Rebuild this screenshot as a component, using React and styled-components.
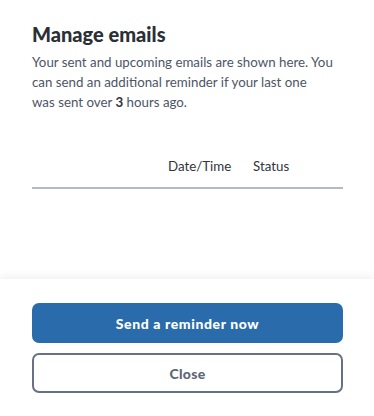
import React from 'react';
import styled, { createGlobalStyle } from 'styled-components';

const GlobalStyle = createGlobalStyle`
  html, body {
    margin: 0;
    padding: 0;
    background: #ffffff;
  }
  body {
    font-family: Lato, 'Open Sans', sans-serif;
    -webkit-font-smoothing: antialiased;
  }
`;

const Modal = styled.div`
  width: 374px;
  height: 416px;
  display: flex;
  flex-direction: column;
  background: #ffffff;
  overflow: hidden;
`;

const Body = styled.div`
  flex: 1;
  padding: 22px 31px 0 32px;
`;

const Title = styled.h2`
  margin: 0;
  font-size: 20px;
  line-height: 24px;
  font-weight: 900;
  color: #2b2f36;
`;

const Intro = styled.p`
  margin: 6px 0 0;
  font-size: 13.3px;
  line-height: 20px;
  color: #4d5566;

  strong {
    font-weight: 700;
    color: #2f343d;
  }
`;

const Table = styled.div`
  margin-top: 44px;
`;

const HeadRow = styled.div`
  display: grid;
  grid-template-columns: 136px 85px 1fr;
  padding-bottom: 11px;
  border-bottom: 2px solid #b4b9c5;
`;

const HeadCell = styled.div`
  font-size: 13.3px;
  line-height: 20px;
  color: #30343b;
`;

const Footer = styled.div`
  display: flex;
  flex-direction: column;
  gap: 10px;
  padding: 24px 31px 23px 32px;
  box-shadow: 0 -3px 8px rgba(0, 0, 0, 0.06);
`;

const Button = styled.button`
  height: 40px;
  width: 100%;
  border-radius: 7px;
  font-family: Lato, 'Open Sans', sans-serif;
  font-size: 14px;
  font-weight: 900;
  letter-spacing: ${(p) => (p.$primary ? '0.6px' : '0.3px')};
  cursor: pointer;
  border: 2px solid ${(p) => (p.$primary ? '#2a6cab' : '#687184')};
  background: ${(p) => (p.$primary ? '#2a6cab' : '#ffffff')};
  color: ${(p) => (p.$primary ? '#ffffff' : '#5f6778')};
`;

export default function App() {
  return (
    <>
      <GlobalStyle />
      <Modal>
        <Body>
          <Title>Manage emails</Title>
          <Intro>
            Your sent and upcoming emails are shown here. You can send an additional reminder if
            your last one
            <br />
            was sent over <strong>3</strong> hours ago.
          </Intro>
          <Table>
            <HeadRow>
              <HeadCell />
              <HeadCell>Date/Time</HeadCell>
              <HeadCell>Status</HeadCell>
            </HeadRow>
          </Table>
        </Body>
        <Footer>
          <Button $primary>Send a reminder now</Button>
          <Button>Close</Button>
        </Footer>
      </Modal>
    </>
  );
}
